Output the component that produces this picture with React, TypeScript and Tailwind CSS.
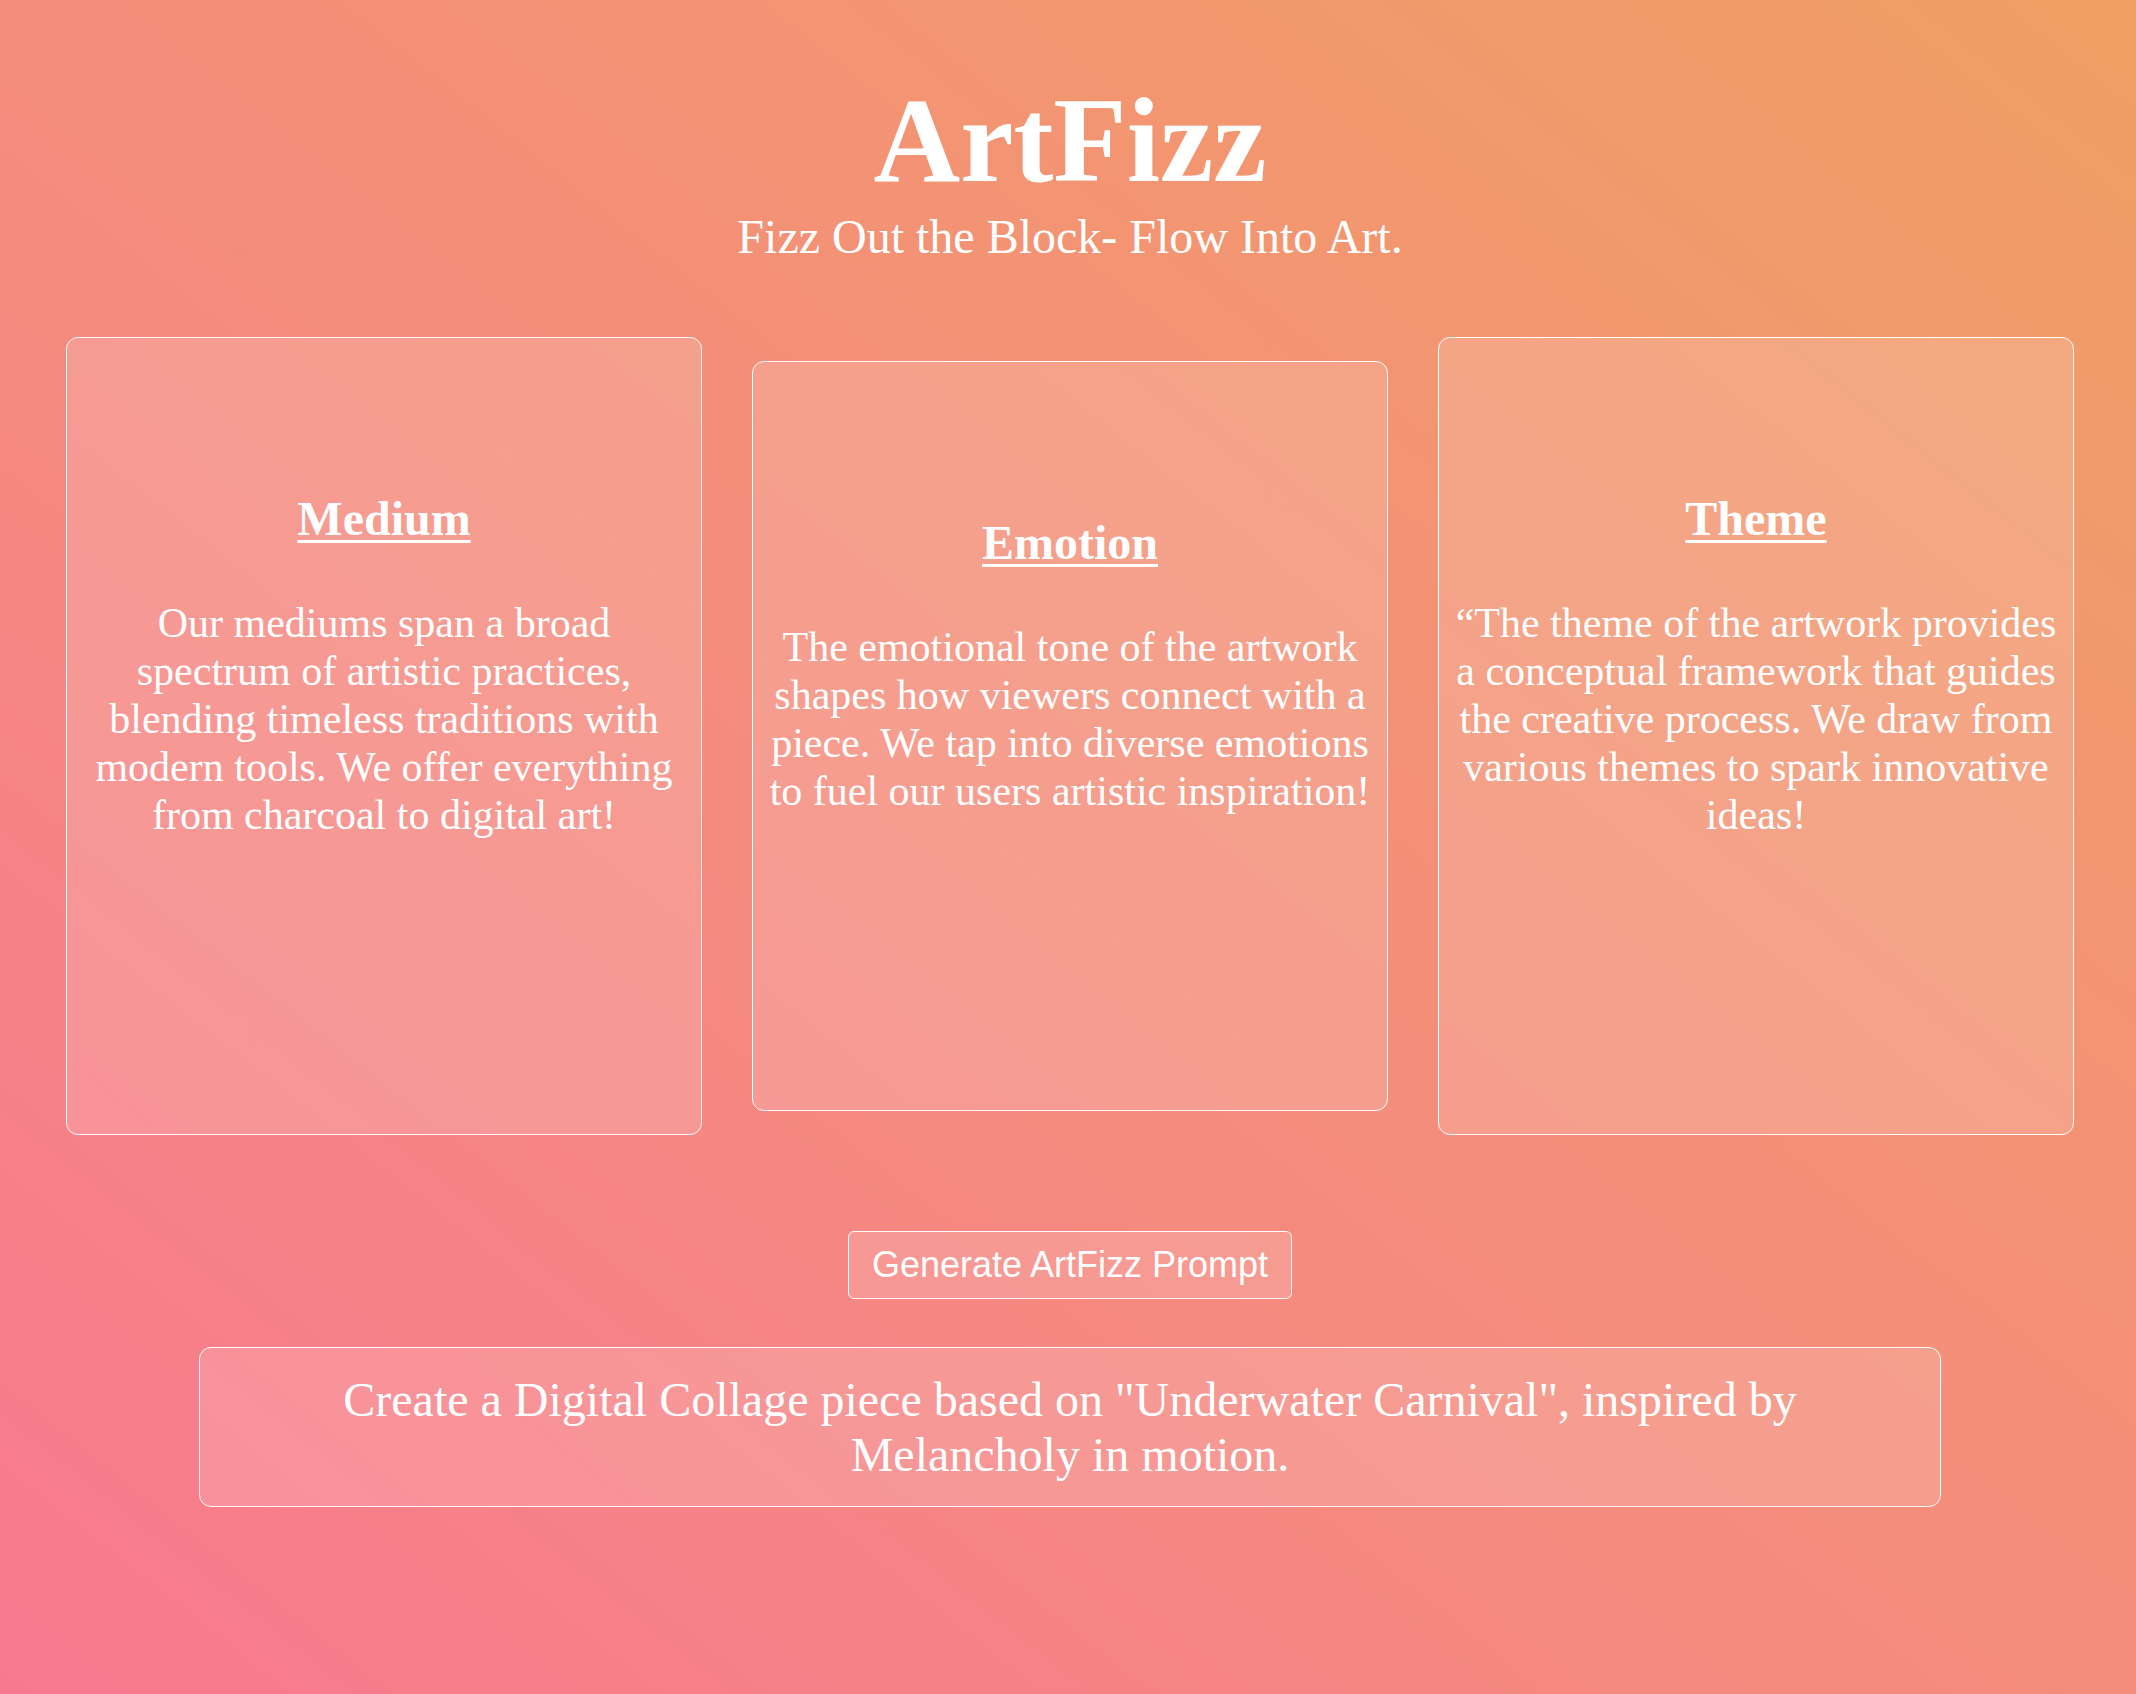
import React from "react";

const cards = [
  {
    title: "Medium",
    body: "Our mediums span a broad spectrum of artistic practices, blending timeless traditions with modern tools. We offer everything from charcoal to digital art!",
  },
  {
    title: "Emotion",
    body: "The emotional tone of the artwork shapes how viewers connect with a piece. We tap into diverse emotions to fuel our users artistic inspiration!",
  },
  {
    title: "Theme",
    body: "\u201CThe theme of the artwork provides a conceptual framework that guides the creative process. We draw from various themes to spark innovative ideas!",
  },
];

export default function App() {
  return (
    <div className="min-h-screen bg-linear-to-tr from-[#f8798f] to-[#f09f63] pl-[4px] text-white font-['Liberation_Serif','Times_New_Roman',serif]">
      <header className="pt-[74px] text-center">
        <h1 className="text-[120px] font-bold leading-[133px]">ArtFizz</h1>
        <p className="mt-[3px] text-[48px] leading-[53px]">Fizz Out the Block- Flow Into Art.</p>
      </header>

      <div className="mt-[74px] flex items-center gap-[50px] px-[62px]">
        {cards.map((c) => (
          <div
            key={c.title}
            className="flex-1 rounded-xl border border-white bg-white/15 px-4 pt-[154px] pb-[295px] text-center"
          >
            <h2 className="text-[48px] font-bold leading-[53px] underline decoration-[3px] underline-offset-[5px]">
              {c.title}
            </h2>
            <p className="mt-[54px] text-[42px] leading-[48px]">{c.body}</p>
          </div>
        ))}
      </div>

      <div className="mt-[96px] flex justify-center">
        <button className="rounded-md border border-white bg-white/15 px-[23px] py-3 font-['Liberation_Sans',Arial,sans-serif] text-[36px] leading-[42px] text-white">
          Generate ArtFizz Prompt
        </button>
      </div>

      <div className="mx-auto mt-[48px] w-[1742px] rounded-xl border border-white bg-white/15 px-[40px] py-6 text-center text-[48px] leading-[55px]">
        Create a Digital Collage piece based on "Underwater Carnival", inspired by Melancholy in motion.
      </div>
    </div>
  );
}
